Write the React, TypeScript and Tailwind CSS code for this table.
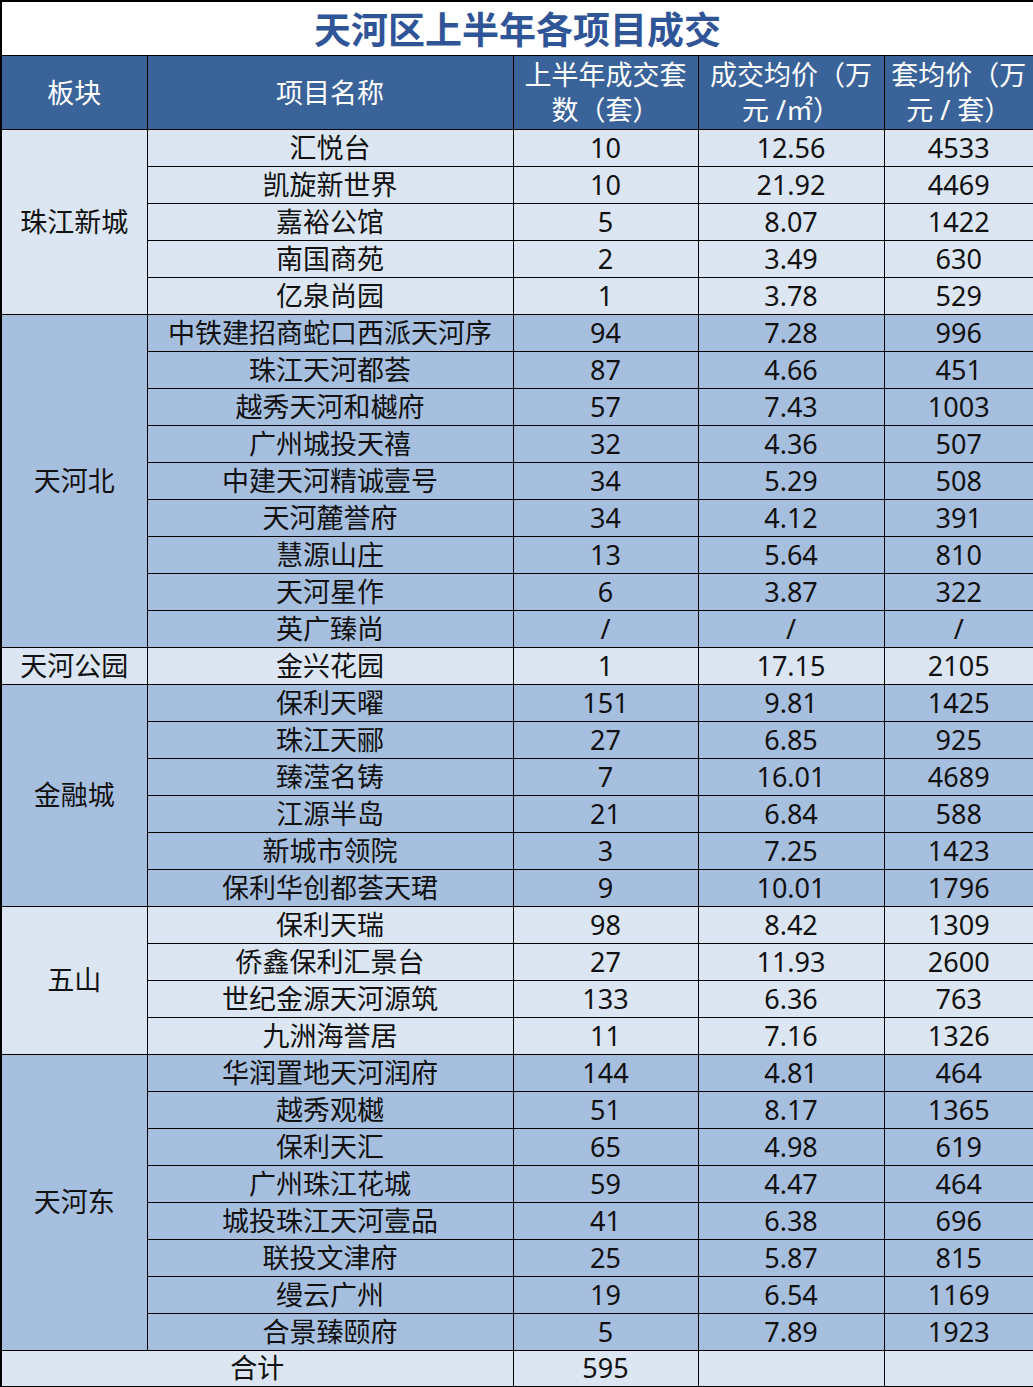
import React from 'react'

type Row = [string, string, string, string]

interface Group {
  area: string
  dark: boolean
  rows: Row[]
}

const groups: Group[] = [
  {
    area: '珠江新城',
    dark: false,
    rows: [
      ['汇悦台', '10', '12.56', '4533'],
      ['凯旋新世界', '10', '21.92', '4469'],
      ['嘉裕公馆', '5', '8.07', '1422'],
      ['南国商苑', '2', '3.49', '630'],
      ['亿泉尚园', '1', '3.78', '529'],
    ],
  },
  {
    area: '天河北',
    dark: true,
    rows: [
      ['中铁建招商蛇口西派天河序', '94', '7.28', '996'],
      ['珠江天河都荟', '87', '4.66', '451'],
      ['越秀天河和樾府', '57', '7.43', '1003'],
      ['广州城投天禧', '32', '4.36', '507'],
      ['中建天河精诚壹号', '34', '5.29', '508'],
      ['天河麓誉府', '34', '4.12', '391'],
      ['慧源山庄', '13', '5.64', '810'],
      ['天河星作', '6', '3.87', '322'],
      ['英广臻尚', '/', '/', '/'],
    ],
  },
  {
    area: '天河公园',
    dark: false,
    rows: [['金兴花园', '1', '17.15', '2105']],
  },
  {
    area: '金融城',
    dark: true,
    rows: [
      ['保利天曜', '151', '9.81', '1425'],
      ['珠江天郦', '27', '6.85', '925'],
      ['臻滢名铸', '7', '16.01', '4689'],
      ['江源半岛', '21', '6.84', '588'],
      ['新城市领院', '3', '7.25', '1423'],
      ['保利华创都荟天珺', '9', '10.01', '1796'],
    ],
  },
  {
    area: '五山',
    dark: false,
    rows: [
      ['保利天瑞', '98', '8.42', '1309'],
      ['侨鑫保利汇景台', '27', '11.93', '2600'],
      ['世纪金源天河源筑', '133', '6.36', '763'],
      ['九洲海誉居', '11', '7.16', '1326'],
    ],
  },
  {
    area: '天河东',
    dark: true,
    rows: [
      ['华润置地天河润府', '144', '4.81', '464'],
      ['越秀观樾', '51', '8.17', '1365'],
      ['保利天汇', '65', '4.98', '619'],
      ['广州珠江花城', '59', '4.47', '464'],
      ['城投珠江天河壹品', '41', '6.38', '696'],
      ['联投文津府', '25', '5.87', '815'],
      ['缦云广州', '19', '6.54', '1169'],
      ['合景臻颐府', '5', '7.89', '1923'],
    ],
  },
]

const cell = 'border border-black text-center align-middle p-0 whitespace-nowrap leading-[34px]'
const headCell = 'border border-black text-center align-middle p-0 leading-[35px] text-white font-normal'

export default function App() {
  return (
    <div
      className="w-[1033px] bg-white text-[27px] leading-[34px] text-[#111]"
      style={{ fontFamily: '"Noto Sans", "Noto Sans CJK SC", sans-serif' }}
    >
      <table className="w-[1033px] table-fixed border-collapse border-2 border-black">
        <colgroup>
          <col className="w-[146px]" />
          <col className="w-[366px]" />
          <col className="w-[185px]" />
          <col className="w-[186px]" />
          <col className="w-[150px]" />
        </colgroup>
        <thead>
          <tr className="h-[54px]">
            <th
              colSpan={5}
              className="border border-black bg-white text-center align-middle p-0 text-[37px] font-bold text-[#2f5597] leading-[50px]"
              style={{ fontFamily: '"Noto Sans CJK SC", sans-serif' }}
            >
              天河区上半年各项目成交
            </th>
          </tr>
          <tr className="h-[74px] bg-[#3a6399]">
            <th className={headCell}>板块</th>
            <th className={headCell}>项目名称</th>
            <th className={headCell}>
              上半年成交套
              <br />
              数（套）
            </th>
            <th className={headCell}>
              成交均价（万
              <br />
              元 /㎡）
            </th>
            <th className={headCell}>
              套均价（万
              <br />
              元 / 套）
            </th>
          </tr>
        </thead>
        <tbody>
          {groups.map(g =>
            g.rows.map((r, i) => (
              <tr key={g.area + r[0]} className={`h-[37px] ${g.dark ? 'bg-[#a7bfdf]' : 'bg-[#dce6f2]'}`}>
                {i === 0 && (
                  <td rowSpan={g.rows.length} className={cell}>
                    {g.area}
                  </td>
                )}
                <td className={cell}>{r[0]}</td>
                <td className={cell}>{r[1]}</td>
                <td className={cell}>{r[2]}</td>
                <td className={cell}>{r[3]}</td>
              </tr>
            ))
          )}
          <tr className="h-[37px] bg-[#dce6f2]">
            <td colSpan={2} className={cell}>
              合计
            </td>
            <td className={cell}>595</td>
            <td className={cell}></td>
            <td className={cell}></td>
          </tr>
        </tbody>
      </table>
    </div>
  )
}
